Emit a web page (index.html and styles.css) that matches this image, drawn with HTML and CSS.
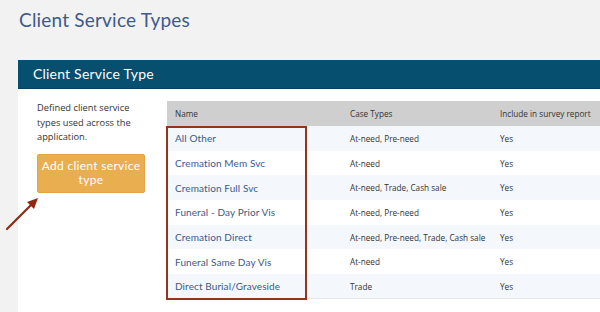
FILE: index.html
```html
<!DOCTYPE html>
<html>
<head>
<meta charset="utf-8">
<link rel="stylesheet" href="styles.css">
</head>
<body>
<div class="page">
  <h1 class="page-title">Client Service Types</h1>
  <div class="panel">
    <div class="panel-head">Client Service Type</div>
    <div class="panel-body">
      <div class="side">
        <p class="desc">Defined client service types used across the application.</p>
        <button class="add-btn">Add client service type</button>
      </div>
      <div class="table-wrap">
        <table class="grid">
          <thead>
            <tr><th class="c-name">Name</th><th class="c-case">Case Types</th><th class="c-inc">Include in survey report</th></tr>
          </thead>
          <tbody>
            <tr><td class="name">All Other</td><td>At-need, Pre-need</td><td>Yes</td></tr>
            <tr><td class="name">Cremation Mem Svc</td><td>At-need</td><td>Yes</td></tr>
            <tr><td class="name">Cremation Full Svc</td><td>At-need, Trade, Cash sale</td><td>Yes</td></tr>
            <tr><td class="name">Funeral - Day Prior Vis</td><td>At-need, Pre-need</td><td>Yes</td></tr>
            <tr><td class="name">Cremation Direct</td><td>At-need, Pre-need, Trade, Cash sale</td><td>Yes</td></tr>
            <tr><td class="name">Funeral Same Day Vis</td><td>At-need</td><td>Yes</td></tr>
            <tr><td class="name">Direct Burial/Graveside</td><td>Trade</td><td>Yes</td></tr>
          </tbody>
        </table>
        <div class="highlight"></div>
      </div>
    </div>
  </div>
  <svg class="arrow" width="40" height="40" viewBox="0 0 40 40">
    <line x1="7" y1="38" x2="33" y2="12" stroke="#8e2a12" stroke-width="2.2" stroke-linecap="round"/>
    <polygon points="38,7 27,11 34,18" fill="#8e2a12"/>
  </svg>
</div>
</body>
</html>
```
FILE: styles.css
```css
* { box-sizing: border-box; }
html, body { margin: 0; padding: 0; }
body {
  background: #f2f2f2;
  width: 600px;
  height: 312px;
  overflow: hidden;
  font-family: "Lato", "Open Sans", sans-serif;
}
.page {
  position: relative;
  padding: 7px 0 0 18px;
}
.page-title {
  margin: 0 0 0 1px;
  font-family: "Lato", sans-serif;
  font-weight: 400;
  font-size: 19px;
  line-height: 26px;
  color: #3e5a8a;
  letter-spacing: 0.2px;
}
.panel {
  margin-top: 27px;
  width: 582px;
  background: #fff;
  height: 252px;
}
.panel-head {
  height: 29px;
  background: #064f6f;
  border-bottom: 1px solid #0a3f5c;
  color: #fff;
  font-size: 14px;
  line-height: 28px;
  padding-left: 15px;
  letter-spacing: 0.2px;
}
.panel-body {
  display: flex;
  padding: 12px 0 0 19px;
}
.side {
  width: 130px;
  flex: none;
}
.desc {
  margin: 0;
  font-family: "Open Sans", sans-serif;
  font-size: 9.3px;
  line-height: 14.5px;
  color: #333;
  width: 108px;
}
.add-btn {
  margin-top: 9px;
  width: 108px;
  height: 39px;
  border: 1px solid #e2a446;
  border-radius: 2px;
  background: #e9ae50;
  color: #fff;
  font-family: "Lato", sans-serif;
  font-weight: 400;
  font-size: 12px;
  line-height: 14px;
  padding: 0 2px;
  letter-spacing: 0.3px;
}
.table-wrap {
  position: relative;
  flex: 1;
  min-width: 0;
}
.grid {
  border-collapse: collapse;
  table-layout: fixed;
  width: 100%;
  font-family: "Open Sans", sans-serif;
  font-size: 8.2px;
  color: #333;
  border-bottom: 1px solid #e6e6e6;
  white-space: nowrap;
}
.grid th {
  background: #cfcfcf;
  font-weight: 400;
  text-align: left;
  height: 25px;
  padding: 0 8px;
  color: #333;
}
.grid td {
  height: 24.7px;
  padding: 0 8px;
}
.grid tbody tr:nth-child(odd) td { background: #f4f8fc; }
.grid tbody tr:nth-child(even) td { background: #fff; }
.c-name { width: 175px; }
.c-case { width: 150px; }
.grid td.name {
  font-family: "Lato", sans-serif;
  font-size: 10px;
  color: #3a5890;
  letter-spacing: 0.1px;
}
.highlight {
  position: absolute;
  left: -1px;
  top: 25px;
  width: 141px;
  height: 174px;
  border: 2px solid #94351b;
  pointer-events: none;
}
.arrow {
  position: absolute;
  left: 0;
  top: 191px;
}
```
